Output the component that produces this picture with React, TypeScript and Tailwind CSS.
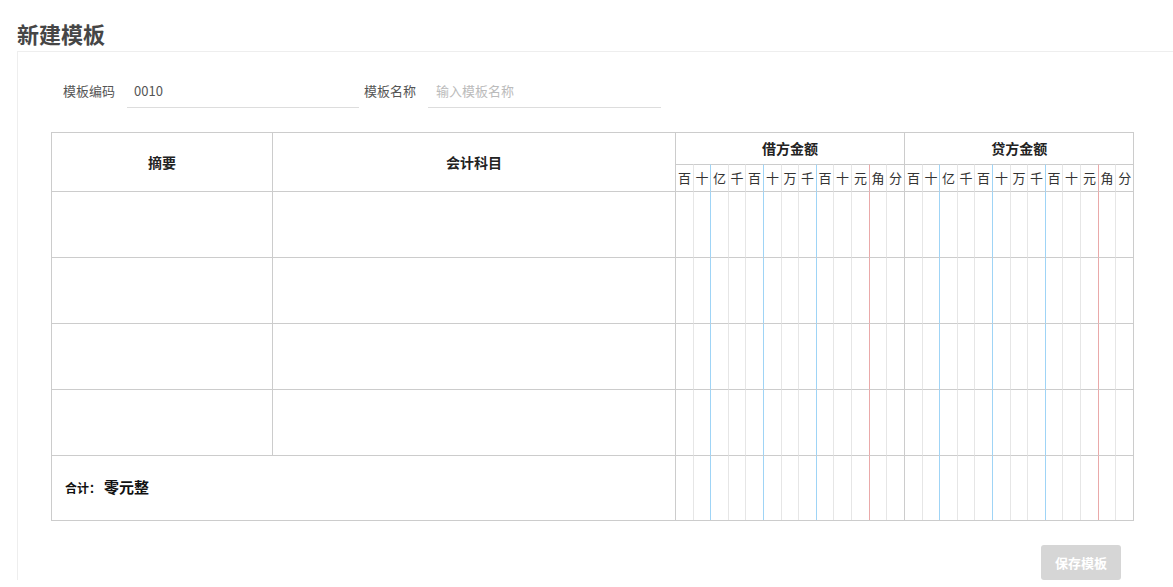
import React from "react";

const DIGITS = ["百", "十", "亿", "千", "百", "十", "万", "千", "百", "十", "元", "角", "分"];
// integer widths so the coloured rules land on whole pixels
const WIDTHS = [18, 17, 18, 17, 18, 18, 17, 18, 17, 18, 18, 17, 18];
const W_CLASS: Record<number, string> = { 17: "w-[17px]", 18: "w-[18px]" };

// left border colour of each digit cell inside a 13-cell amount group
function digitBorder(i: number) {
  if (i === 0) return "border-l-[#cccccc]";
  if (i === 2 || i === 5 || i === 8) return "border-l-[#9fd4f6]";
  if (i === 11) return "border-l-[#eaa9a9]";
  return "border-l-[#e6e6e6]";
}

function AmountCells({ header = false }: { header?: boolean }) {
  return (
    <>
      {[0, 1].map((g) =>
        DIGITS.map((d, i) => (
          <td
            key={`${g}-${i}`}
            className={`border-l border-t border-t-[#cccccc] p-0 text-center ${digitBorder(i)} ${
              header ? "text-[13px] text-[#333]" : ""
            }`}
          >
            {header ? d : null}
          </td>
        ))
      )}
    </>
  );
}

export default function App() {
  const rows = [0, 1, 2, 3];

  return (
    <div
      className="min-h-[587px] bg-white pl-[17px] text-[#333]"
      style={{ fontFamily: '"Noto Sans CJK SC", "Noto Sans", sans-serif' }}
    >
      <h1 className="flex h-[51px] items-end pb-[7px] text-[22px] font-bold leading-none text-[#464646]">
        新建模板
      </h1>

      <div className="border-l border-t border-[#eeeeee] pl-[33px] pr-[40px] pt-[22px]">
        {/* form */}
        <div className="flex h-[34px] items-stretch text-[13px]">
          <label className="flex w-[76px] items-center justify-end pr-3 text-[#555]">模板编码</label>
          <div className="flex w-[232px] items-center border-b border-[#dddddd] pl-[7px] text-[#555]">0010</div>
          <label className="ml-[5px] flex w-[64px] items-center pr-3 text-[#555]">模板名称</label>
          <div className="flex w-[233px] items-center border-b border-[#dddddd] pl-[8px] text-[#bbbbbb]">
            输入模板名称
          </div>
        </div>

        {/* voucher table */}
        <div className="mt-[24px] w-[1083px] border-b border-r border-[#cccccc]">
          <table className="w-full table-fixed border-separate border-spacing-0">
            <colgroup>
              <col className="w-[221px]" />
              <col className="w-[403px]" />
              {[0, 1].map((g) => WIDTHS.map((w, i) => <col key={`${g}-${i}`} className={W_CLASS[w]} />))}
            </colgroup>
            <thead>
              <tr className="h-[32px]">
                <th rowSpan={2} className="border-l border-t border-[#cccccc] p-0 text-[14px] font-bold text-[#222]">
                  摘要
                </th>
                <th rowSpan={2} className="border-l border-t border-[#cccccc] p-0 text-[14px] font-bold text-[#222]">
                  会计科目
                </th>
                <th colSpan={13} className="border-l border-t border-[#cccccc] p-0 text-[14px] font-bold text-[#222]">
                  借方金额
                </th>
                <th colSpan={13} className="border-l border-t border-[#cccccc] p-0 text-[14px] font-bold text-[#222]">
                  贷方金额
                </th>
              </tr>
              <tr className="h-[27px]">
                <AmountCells header />
              </tr>
            </thead>
            <tbody>
              {rows.map((r) => (
                <tr key={r} className="h-[66px]">
                  <td className="border-l border-t border-[#cccccc] p-0" />
                  <td className="border-l border-t border-[#cccccc] p-0" />
                  <AmountCells />
                </tr>
              ))}
              <tr className="h-[65px]">
                <td colSpan={2} className="border-l border-t border-[#cccccc] p-0 pb-[3px] pl-[13px] text-[#111]">
                  <span className="text-[12px] font-semibold">合计：</span>
                  <span className="ml-[3px] text-[15px] font-bold">零元整</span>
                </td>
                <AmountCells />
              </tr>
            </tbody>
          </table>
        </div>

        <div className="flex w-[1083px] justify-end pr-[13px] pt-[24px]">
          <button className="h-[35px] w-[80px] rounded-[3px] bg-[#d6d6d6] text-[13px] font-bold text-white">
            保存模板
          </button>
        </div>
      </div>
    </div>
  );
}
